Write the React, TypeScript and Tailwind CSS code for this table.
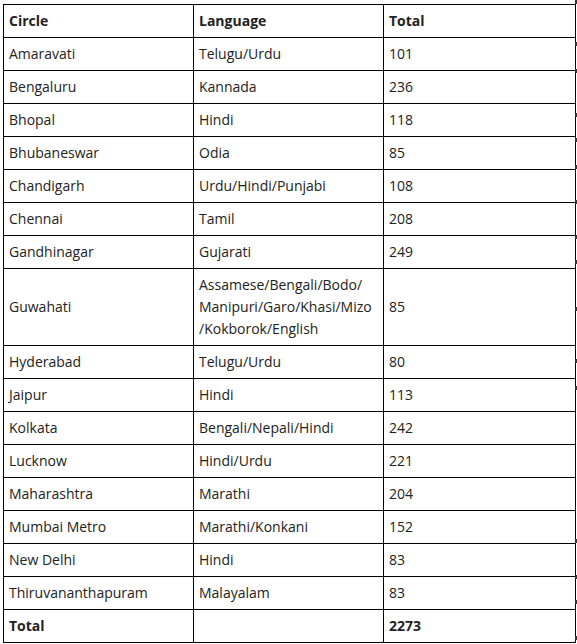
const rows: [string, string[], string][] = [
  ["Amaravati", ["Telugu/Urdu"], "101"],
  ["Bengaluru", ["Kannada"], "236"],
  ["Bhopal", ["Hindi"], "118"],
  ["Bhubaneswar", ["Odia"], "85"],
  ["Chandigarh", ["Urdu/Hindi/Punjabi"], "108"],
  ["Chennai", ["Tamil"], "208"],
  ["Gandhinagar", ["Gujarati"], "249"],
  ["Guwahati", ["Assamese/Bengali/Bodo/", "Manipuri/Garo/Khasi/Mizo", "/Kokborok/English"], "85"],
  ["Hyderabad", ["Telugu/Urdu"], "80"],
  ["Jaipur", ["Hindi"], "113"],
  ["Kolkata", ["Bengali/Nepali/Hindi"], "242"],
  ["Lucknow", ["Hindi/Urdu"], "221"],
  ["Maharashtra", ["Marathi"], "204"],
  ["Mumbai Metro", ["Marathi/Konkani"], "152"],
  ["New Delhi", ["Hindi"], "83"],
  ["Thiruvananthapuram", ["Malayalam"], "83"],
];

// little dark ticks hanging off the right edge
const ticks = [0, 42, 69, 113, 138, 165, 200, 235, 260, 307, 359, 386, 539, 575, 600, 636];

const cell = "border border-black px-[5px] py-[5px] align-middle";

export default function App() {
  return (
    <div className="relative h-[644px] w-[577px] overflow-hidden bg-white pl-[3px] pt-[4px] font-['Open_Sans',sans-serif] text-[14px] leading-[22px] text-[#222]">
      <table className="w-[572px] table-fixed border-collapse">
        <colgroup>
          <col className="w-[190px]" />
          <col className="w-[190px]" />
          <col className="w-[192px]" />
        </colgroup>
        <thead>
          <tr className="font-bold">
            <td className={cell}>Circle</td>
            <td className={cell}>Language</td>
            <td className={cell}>Total</td>
          </tr>
        </thead>
        <tbody>
          {rows.map(([circle, langs, total]) => (
            <tr key={circle}>
              <td className={cell}>{circle}</td>
              <td className={cell}>
                {langs.map((l) => (
                  <div key={l}>{l}</div>
                ))}
              </td>
              <td className={cell}>{total}</td>
            </tr>
          ))}
          <tr className="font-bold">
            <td className={cell}>Total</td>
            <td className={cell}></td>
            <td className={cell}>2273</td>
          </tr>
        </tbody>
      </table>
      {ticks.map((y) => (
        <span key={y} className="absolute left-[575px] h-[4px] w-[2px] bg-[#333]" style={{ top: y }} />
      ))}
    </div>
  );
}
